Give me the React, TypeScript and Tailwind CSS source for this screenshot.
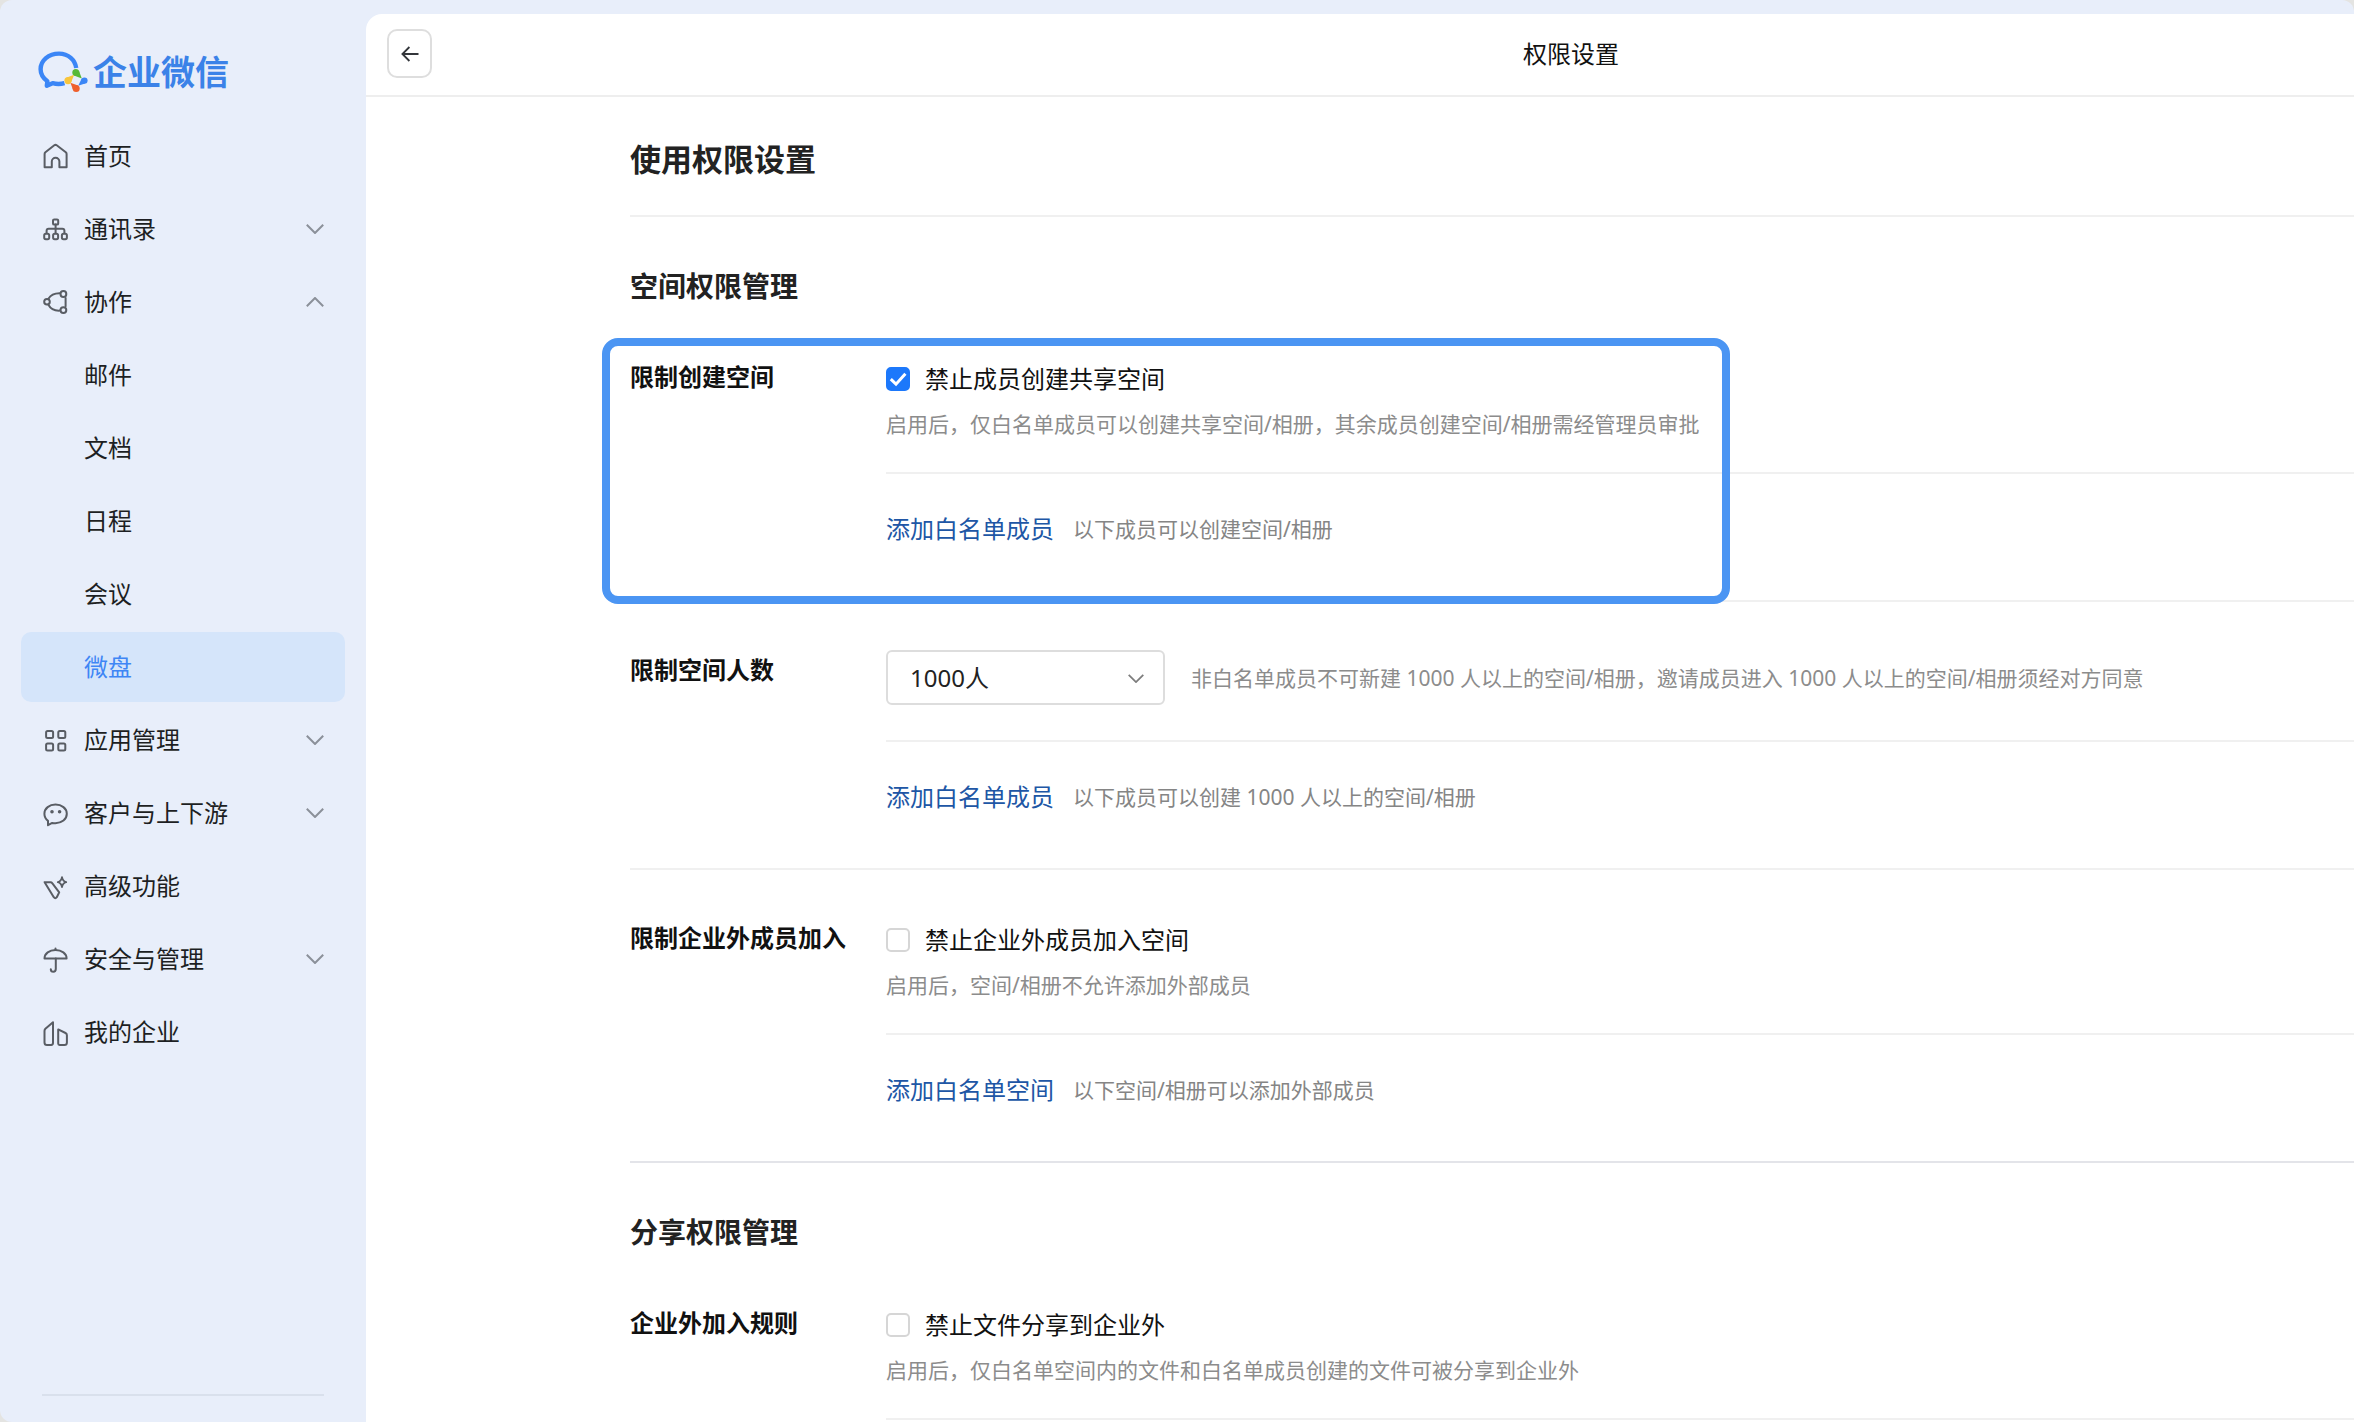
import React, { useState } from 'react'

type NavEntry = {
  label: string
  icon?: React.ReactNode
  arrow?: 'up' | 'down'
  active?: boolean
}

const NavIcon: React.FC<{ children: React.ReactNode }> = ({ children }) => (
  <svg
    viewBox="0 1 25 25"
    className="h-[25px] w-[25px] shrink-0 overflow-visible text-[#595d64]"
    fill="none"
    stroke="currentColor"
    strokeWidth="2"
    strokeLinejoin="round"
    strokeLinecap="round"
    aria-hidden="true"
  >
    {children}
  </svg>
)

const navEntries: NavEntry[] = [
  {
    label: '首页',
    icon: (
      <NavIcon>
        <path d="M1.6 11Q1.6 10 2.4 9.3L11.3 2.3Q12.5 1.4 13.7 2.3L22.8 9.3Q23.6 10 23.6 11V24.2H16.4V18.6a3.8 3.8 0 0 0-7.6 0V24.2H1.6Z" />
      </NavIcon>
    ),
  },
  {
    label: '通讯录',
    arrow: 'down',
    icon: (
      <NavIcon>
        <rect x="10" y="3.4" width="5.2" height="5.2" rx="1.2" />
        <path d="M12.6 8.6V17M3.6 17V14.8Q3.6 12.7 5.6 12.7H19.4Q21.4 12.7 21.4 14.8V17" />
        <rect x="1.2" y="17.8" width="5" height="5.4" rx="1.6" />
        <rect x="10.1" y="17.8" width="5" height="5.4" rx="1.6" />
        <rect x="18.9" y="17.8" width="5" height="5.4" rx="1.6" />
      </NavIcon>
    ),
  },
  {
    label: '协作',
    arrow: 'up',
    icon: (
      <NavIcon>
        <circle cx="4" cy="12.8" r="2.8" />
        <circle cx="20.4" cy="5" r="2.9" />
        <circle cx="20.4" cy="21.1" r="2.9" />
        <path d="M5.4 9.8C7.4 6.4 11.2 4.2 16.8 4.3M5.4 15.8C7.4 19.6 11.2 21.9 16.8 21.6M22.6 9V17.2" />
      </NavIcon>
    ),
  },
  { label: '邮件' },
  { label: '文档' },
  { label: '日程' },
  { label: '会议' },
  { label: '微盘', active: true },
  {
    label: '应用管理',
    arrow: 'down',
    icon: (
      <NavIcon>
        <rect x="3.1" y="4.1" width="7" height="7" rx="1.5" />
        <rect x="15.3" y="4.1" width="7" height="7" rx="1.5" />
        <rect x="3.1" y="16.5" width="7" height="7" rx="1.5" />
        <rect x="15.3" y="16.5" width="7" height="7" rx="1.5" />
      </NavIcon>
    ),
  },
  {
    label: '客户与上下游',
    arrow: 'down',
    icon: (
      <NavIcon>
        <path d="M5 25.2V20.9C2.7 19.1 1.4 16.5 1.4 13.8C1.4 8.3 6.4 4.6 12.5 4.6S23.8 8.3 23.8 13.8S18.7 23.2 12.5 23.2C11.3 23.2 10.2 23.1 9.2 22.9Z" />
        <circle cx="9" cy="11.7" r="0.8" fill="currentColor" />
        <circle cx="16.6" cy="11.7" r="0.8" fill="currentColor" />
      </NavIcon>
    ),
  },
  {
    label: '高级功能',
    icon: (
      <NavIcon>
        <path d="M1.6 9.2H7.6Q8.6 9.2 9.2 10.1L16.2 19.4L13.8 24.2Q12.3 26.2 10.8 24.2Z" />
        <path
          d="M19 4.2Q19.6 8.4 23.2 9.2Q19.6 10 19 14.2Q18.4 10 14.8 9.2Q18.4 8.4 19 4.2Z"
          strokeWidth="1.8"
        />
      </NavIcon>
    ),
  },
  {
    label: '安全与管理',
    arrow: 'down',
    icon: (
      <NavIcon>
        <path d="M1.5 12.5C1.5 7.4 6.4 4 12.5 4S23.6 7.4 23.6 12.5Z" />
        <path d="M12.5 2.4V3.8M12.8 12.5V22.8Q12.8 25.8 10.3 25.8Q7.8 25.8 7.8 23.3" />
      </NavIcon>
    ),
  },
  {
    label: '我的企业',
    icon: (
      <NavIcon>
        <path d="M10 3.2L2.4 9.8Q1.5 10.7 1.5 12V23.4Q1.5 25.9 4 25.9H8.2Q10 25.9 10 24.1Z" />
        <path d="M15.2 10.4L22.5 14Q23.9 14.7 23.9 16.2V23.4Q23.9 25.9 21.4 25.9H16.6Q15.2 25.9 15.2 24.5Z" />
      </NavIcon>
    ),
  },
]

const Logo: React.FC = () => (
  <svg viewBox="0 0 50 42" className="h-[42px] w-[50px] shrink-0" fill="none" aria-hidden="true">
    <path
      d="M38.2 17C37.2 9 30.5 2.6 21 2.6C10.6 2.6 2.6 9.6 2.6 18.2C2.6 23 5 27 9.4 30.2L8.8 34.8L14.6 32.2C18.5 33.3 22.5 33.3 26.5 32.2"
      stroke="#3b86f6"
      strokeWidth="4.4"
      strokeLinejoin="round"
    />
    <g fill="#58b938">
      <circle cx="37.8" cy="21.4" r="3.5" />
      <path d="M41 20L43.8 27.4L36 24.4Z" />
    </g>
    <g fill="#3b86f6">
      <circle cx="46.4" cy="29.6" r="3.2" />
      <path d="M47 32.6L40.2 34.8L43.6 27.8Z" />
    </g>
    <g fill="#ef5f2c">
      <circle cx="38.2" cy="37.6" r="3.5" />
      <path d="M35 38.8L32.4 31.8L40 34.6Z" />
    </g>
    <g fill="#f8c53c">
      <circle cx="30" cy="29.6" r="3.6" />
      <path d="M28.8 26.4L36.2 23.8L33 31.6Z" />
    </g>
  </svg>
)

const Chevron: React.FC<{ className: string }> = ({ className }) => (
  <svg
    viewBox="0 0 18 10"
    className={className}
    fill="none"
    stroke="currentColor"
    strokeWidth="2"
    aria-hidden="true"
  >
    <path d="M0.8 0.8L9 9L17.2 0.8" />
  </svg>
)

const NavItem: React.FC<{ entry: NavEntry }> = ({ entry }) => (
  <li>
    <a
      href="#"
      className={
        entry.active
          ? 'flex h-[70px] items-center gap-4 rounded-[10px] bg-[#d5e5fa] pl-[22px] pr-[21px] text-[#3f86f5]'
          : 'flex h-[70px] items-center gap-4 rounded-[10px] pl-[22px] pr-[21px] text-[#1d1f23]'
      }
    >
      {entry.icon || <span className="w-[25px]" />}
      <span className="flex-1">{entry.label}</span>
      {entry.arrow && (
        <Chevron
          className={
            entry.arrow === 'up'
              ? 'h-[10px] w-[18px] rotate-180 text-[#8b9099]'
              : 'h-[10px] w-[18px] text-[#8b9099]'
          }
        />
      )}
    </a>
  </li>
)

const CheckRow: React.FC<{ id: string; label: string; hint: string; defaultChecked?: boolean }> = ({
  id,
  label,
  hint,
  defaultChecked = false,
}) => {
  const [checked, setChecked] = useState(defaultChecked)

  return (
    <div className="border-b-2 border-[#f0f0f0] pb-8">
      <div className="flex items-center gap-[15px]">
        <span className="grid shrink-0">
          <input
            id={id}
            type="checkbox"
            checked={checked}
            onChange={(e) => setChecked(e.target.checked)}
            className="col-start-1 row-start-1 h-6 w-6 appearance-none rounded-[5px] border-2 border-[#d6d6d6] bg-white checked:border-[#1c78fb] checked:bg-[#1c78fb]"
          />
          {checked && (
            <svg
              viewBox="0 0 24 24"
              className="pointer-events-none col-start-1 row-start-1 h-6 w-6"
              fill="none"
              stroke="#fff"
              strokeWidth="3"
              aria-hidden="true"
            >
              <path d="M4.8 12.2L10 17.2L19.4 6.8" />
            </svg>
          )}
        </span>
        <label htmlFor={id} className="leading-9 text-[#111]">
          {label}
        </label>
      </div>
      <p className="mt-[11px] text-[21px] leading-8 text-[#8c8c8c]">{hint}</p>
    </div>
  )
}

const WhitelistRow: React.FC<{ link: string; hint: string }> = ({ link, hint }) => (
  <div className="flex items-center gap-[19px] pb-[53px] pt-[37px]">
    <a href="#" className="leading-9 text-[#2056a5]">
      {link}
    </a>
    <span className="text-[21px] leading-8 text-[#858585]">{hint}</span>
  </div>
)

const GroupTitle: React.FC<{ children: React.ReactNode }> = ({ children }) => (
  <h2 className="pb-[54px] pt-12 text-[28px] font-bold leading-[42px] text-[#222]">{children}</h2>
)

const App: React.FC = () => {
  const [limit, setLimit] = useState('1000')

  return (
    <div lang="zh-CN" className="h-screen overflow-hidden bg-[#e4e4e2]">
      <div className="flex h-full rounded-[12px] bg-[#e8eefa] font-['Noto_Sans','Noto_Sans_CJK_SC',sans-serif] text-[24px]">
        <aside className="flex w-[366px] shrink-0 flex-col px-[21px] pt-[50px]">
          <div className="flex h-[44px] items-center gap-[5px] pl-[17px]">
            <Logo />
            <span className="text-[34px] font-bold leading-[42px] text-[#3b82e8]">企业微信</span>
          </div>
          <nav className="pt-[27px]">
            <ul className="flex flex-col gap-[3px]">
              {navEntries.map((entry) => (
                <NavItem key={entry.label} entry={entry} />
              ))}
            </ul>
          </nav>
          <div className="mx-[21px] mb-[26px] mt-auto border-b-2 border-[#d9e0ec]" />
        </aside>

        <main className="mt-[14px] min-w-0 flex-1 overflow-hidden rounded-tl-[16px] bg-white">
          <header className="flex h-[83px] items-center border-b-2 border-[#eeeeee] pb-[2px] pl-[21px]">
            <button
              type="button"
              aria-label="返回"
              className="flex h-[49px] w-[45px] shrink-0 items-center justify-center rounded-[10px] border-2 border-[#dedede] bg-white"
            >
              <svg
                viewBox="0 0 18 16"
                className="h-4 w-[18px]"
                fill="none"
                stroke="#33363b"
                strokeWidth="1.8"
                aria-hidden="true"
              >
                <path d="M17.5 8H1.6M8.4 1L1.4 8L8.4 15" />
              </svg>
            </button>
            <div className="flex-1 pl-[356px] text-center leading-9 text-[#111]">权限设置</div>
          </header>

          <div className="pl-[264px]">
            <h1 className="border-b-2 border-[#f0f0f0] pb-[33px] pt-[39px] text-[31px] font-bold leading-[46px] text-[#222]">
              使用权限设置
            </h1>

            <GroupTitle>空间权限管理</GroupTitle>

            <section className="relative flex border-b-2 border-[#f0f0f0]">
              <h3 className="w-[256px] shrink-0 font-bold leading-8 text-[#111]">限制创建空间</h3>
              <div className="min-w-0 flex-1">
                <CheckRow
                  id="forbid-create"
                  label="禁止成员创建共享空间"
                  hint="启用后，仅白名单成员可以创建共享空间/相册，其余成员创建空间/相册需经管理员审批"
                  defaultChecked
                />
                <WhitelistRow link="添加白名单成员" hint="以下成员可以创建空间/相册" />
              </div>
              {/* highlight frame */}
              <div className="pointer-events-none absolute -bottom-1 -left-7 -top-[23px] w-[1128px] rounded-[16px] border-8 border-[#4b95f3]" />
            </section>

            <section className="flex border-b-2 border-[#f0f0f0] pt-12">
              <h3 className="w-[256px] shrink-0 pt-1 font-bold leading-8 text-[#111]">
                <label htmlFor="member-limit">限制空间人数</label>
              </h3>
              <div className="min-w-0 flex-1">
                <div className="flex items-center gap-[26px] border-b-2 border-[#f0f0f0] pb-[35px]">
                  <div className="relative w-[279px] shrink-0">
                    <select
                      id="member-limit"
                      value={limit}
                      onChange={(e) => setLimit(e.target.value)}
                      className="h-[55px] w-full appearance-none rounded-[6px] border-2 border-[#dddddd] bg-white pl-[22px] pr-12 text-[#222]"
                    >
                      <option value="1000">1000人</option>
                      <option value="500">500人</option>
                      <option value="200">200人</option>
                    </select>
                    <Chevron className="pointer-events-none absolute right-[21px] top-[24px] h-[9px] w-4 text-[#7d7d7d]" />
                  </div>
                  <p className="text-[21px] leading-8 text-[#8c8c8c]">
                    非白名单成员不可新建 1000 人以上的空间/相册，邀请成员进入 1000 人以上的空间/相册须经对方同意
                  </p>
                </div>
                <WhitelistRow link="添加白名单成员" hint="以下成员可以创建 1000 人以上的空间/相册" />
              </div>
            </section>

            <section className="flex border-b-2 border-[#e3e4e9] pt-[52px]">
              <h3 className="w-[256px] shrink-0 font-bold leading-8 text-[#111]">限制企业外成员加入</h3>
              <div className="min-w-0 flex-1">
                <CheckRow
                  id="forbid-external"
                  label="禁止企业外成员加入空间"
                  hint="启用后，空间/相册不允许添加外部成员"
                />
                <WhitelistRow link="添加白名单空间" hint="以下空间/相册可以添加外部成员" />
              </div>
            </section>

            <GroupTitle>分享权限管理</GroupTitle>

            <section className="flex">
              <h3 className="w-[256px] shrink-0 font-bold leading-8 text-[#111]">企业外加入规则</h3>
              <div className="min-w-0 flex-1">
                <CheckRow
                  id="forbid-share"
                  label="禁止文件分享到企业外"
                  hint="启用后，仅白名单空间内的文件和白名单成员创建的文件可被分享到企业外"
                />
              </div>
            </section>
          </div>
        </main>
      </div>
    </div>
  )
}

export default App
